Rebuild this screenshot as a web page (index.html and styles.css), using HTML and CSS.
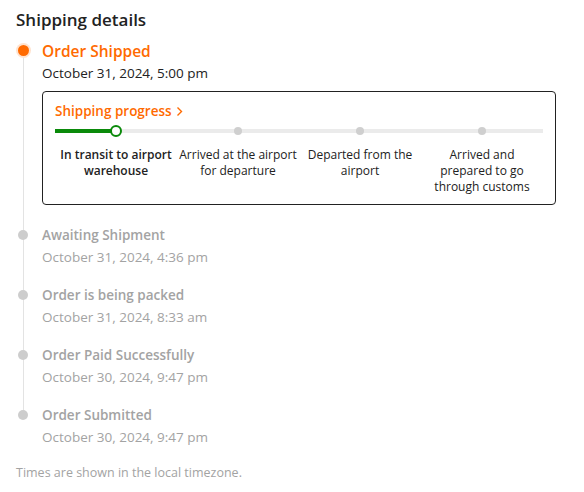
FILE: index.html
```html
<!DOCTYPE html>
<html>
<head>
<meta charset="utf-8">
<link rel="stylesheet" href="styles.css">
</head>
<body>
<div class="page">
  <h1 class="title">Shipping details</h1>
  <ul class="timeline">
    <li class="event current">
      <span class="dot"></span>
      <div class="event-body">
        <div class="event-name">Order Shipped</div>
        <div class="event-date">October 31, 2024, 5:00 pm</div>
        <div class="progress-card">
          <div class="progress-head">Shipping progress <svg class="chev" width="7" height="11" viewBox="0 0 7 11"><path d="M1.5 1.5 L5.5 5.5 L1.5 9.5" fill="none" stroke="currentColor" stroke-width="1.4"/></svg></div>
          <div class="steps">
            <div class="track"><div class="track-fill"></div></div>
            <div class="step done">
              <span class="step-dot"></span>
              <div class="step-label">In transit to airport warehouse</div>
            </div>
            <div class="step">
              <span class="step-dot"></span>
              <div class="step-label">Arrived at the airport for departure</div>
            </div>
            <div class="step">
              <span class="step-dot"></span>
              <div class="step-label">Departed from the airport</div>
            </div>
            <div class="step">
              <span class="step-dot"></span>
              <div class="step-label">Arrived and prepared&nbsp;to&nbsp;go through customs</div>
            </div>
          </div>
        </div>
      </div>
    </li>
    <li class="event">
      <span class="dot"></span>
      <div class="event-body">
        <div class="event-name">Awaiting Shipment</div>
        <div class="event-date">October 31, 2024, 4:36 pm</div>
      </div>
    </li>
    <li class="event">
      <span class="dot"></span>
      <div class="event-body">
        <div class="event-name">Order is being packed</div>
        <div class="event-date">October 31, 2024, 8:33 am</div>
      </div>
    </li>
    <li class="event">
      <span class="dot"></span>
      <div class="event-body">
        <div class="event-name">Order Paid Successfully</div>
        <div class="event-date">October 30, 2024, 9:47 pm</div>
      </div>
    </li>
    <li class="event last">
      <span class="dot"></span>
      <div class="event-body">
        <div class="event-name">Order Submitted</div>
        <div class="event-date">October 30, 2024, 9:47 pm</div>
      </div>
    </li>
  </ul>
  <p class="note">Times are shown in the local timezone.</p>
</div>
</body>
</html>
```

FILE: styles.css
```css
* { box-sizing: border-box; }
html, body { margin: 0; padding: 0; background: #fff; }
body {
  font-family: "Open Sans", "Noto Sans", "Liberation Sans", sans-serif;
  color: #222;
}
.page {
  padding: 8px 28px 0 16px;
}
.title {
  margin: 0;
  font-size: 17px;
  line-height: 24px;
  font-weight: 600;
  color: #222;
}
.timeline {
  list-style: none;
  margin: 8px 0 0;
  padding: 0;
}
.event {
  position: relative;
  display: flex;
  padding-bottom: 16px;
}
.event::before {
  content: "";
  position: absolute;
  left: 7px;
  top: 12px;
  bottom: -12px;
  width: 1px;
  background: #e3e3e3;
}
.event.last::before { display: none; }
.dot {
  position: relative;
  z-index: 1;
  flex: none;
  width: 10px;
  height: 10px;
  margin: 6px 14px 0 2px;
  border-radius: 50%;
  background: #cdcdcd;
}
.event.current .dot {
  width: 11px;
  height: 11px;
  margin: 5px 13px 0 2px;
  background: #ff6a00;
  box-shadow: 0 0 0 2px #ffe3cf;
}
.event-body { flex: 1; min-width: 0; }
.event-name {
  font-size: 13.5px;
  line-height: 22px;
  font-weight: 600;
  color: #a3a3a3;
}
.event-date {
  font-size: 13.5px;
  line-height: 22px;
  color: #a3a3a3;
}
.current .event-name {
  font-size: 15.5px;
  font-weight: 600;
  color: #ff6a00;
}
.current .event-date { color: #222; }
.current { padding-bottom: 19px; }
.progress-card {
  margin-top: 7px;
  border: 1px solid #222;
  border-radius: 4px;
  padding: 9px 12px 9px 12px;
}
.progress-head {
  display: flex;
  align-items: center;
  gap: 4px;
  font-size: 13.5px;
  line-height: 20px;
  font-weight: 600;
  color: #ff6a00;
}
.chev { margin-top: 1px; }
.steps {
  position: relative;
  display: grid;
  grid-template-columns: repeat(4, 1fr);
  margin-top: 0;
}
.track {
  position: absolute;
  left: 0;
  right: 0;
  top: 8px;
  height: 4px;
  background: #ebebeb;
}
.track-fill {
  width: 12.5%;
  height: 100%;
  background: #0a8a0a;
}
.step {
  position: relative;
  display: flex;
  flex-direction: column;
  align-items: center;
}
.step-dot {
  margin-top: 6px;
  width: 8px;
  height: 8px;
  border-radius: 50%;
  background: #cfcfcf;
}
.step.done .step-dot {
  margin-top: 4px;
  width: 12px;
  height: 12px;
  background: #fff;
  border: 2px solid #0a8a0a;
  margin-bottom: -2px;
}
.step-label {
  margin-top: 12px;
  font-size: 12px;
  line-height: 16px;
  text-align: center;
  color: #222;
  padding: 0;
}
.step.done .step-label { font-weight: 600; }
.note {
  margin: 0;
  font-size: 12.5px;
  line-height: 18px;
  color: #a3a3a3;
}
```
